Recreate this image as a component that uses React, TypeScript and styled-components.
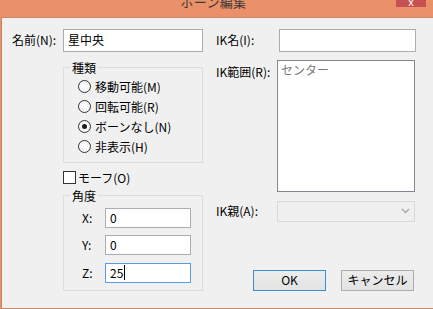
import React from 'react';
import styled, { createGlobalStyle } from 'styled-components';

const GlobalStyle = createGlobalStyle`
  html, body {
    margin: 0;
    padding: 0;
    background: #eb9169;
    overflow: hidden;
  }
  body {
    font-family: "Noto Sans CJK JP", "Noto Sans", sans-serif;
    font-size: 12px;
    color: #000;
  }
`;

const Frame = styled.div`
  width: 433px;
  height: 309px;
  display: flex;
  flex-direction: column;
`;

const TitleBar = styled.div`
  position: relative;
  height: 17px;
  overflow: hidden;
  display: flex;
  justify-content: center;
  align-items: flex-end;
  padding-right: 6px;
`;

const Title = styled.span`
  font-size: 13px;
  line-height: 20px;
  margin-bottom: 5px;
  color: #3a3a3a;
  letter-spacing: 0.3px;
`;

const CloseButton = styled.div`
  position: absolute;
  top: 0;
  right: 7px;
  width: 30px;
  height: 7px;
  background: #c75050;
  overflow: hidden;
  display: flex;
  justify-content: center;
  align-items: flex-end;
  color: #fff;
  font-size: 11px;
  line-height: 11px;
`;

const Client = styled.div`
  margin-left: 1px;
  width: 424px;
  height: 283px;
  background: #f0f0f0;
  border: 1px solid #c98663;
  padding: 11px 0 0 10px;
  box-sizing: content-box;
  display: grid;
  grid-template-columns: 191px 200px;
  column-gap: 13px;
  align-items: start;
`;

const Column = styled.div`
  display: flex;
  flex-direction: column;
`;

const FieldRow = styled.div<{ $label: number; $gap?: number }>`
  display: grid;
  grid-template-columns: ${(p) => p.$label}px auto;
  align-items: center;
  margin-top: ${(p) => p.$gap ?? 0}px;
`;

const Label = styled.span`
  line-height: 16px;
  white-space: nowrap;
`;

const TextInput = styled.div<{ $w: number; $h: number; $focus?: boolean }>`
  width: ${(p) => p.$w}px;
  height: ${(p) => p.$h}px;
  box-sizing: border-box;
  background: #fff;
  border: 1px solid ${(p) => (p.$focus ? '#569de5' : '#abadb3')};
  padding: 0 4px;
  display: flex;
  align-items: center;
  line-height: 16px;
`;

const Caret = styled.span`
  display: inline-block;
  width: 1px;
  height: 15px;
  background: #000;
  margin-left: 1px;
`;

const Group = styled.fieldset<{ $top: number }>`
  margin: ${(p) => p.$top}px 0 0 51px;
  width: 140px;
  box-sizing: border-box;
  border: 1px solid #dcdcdc;
  padding: 0;
`;

const GroupBody = styled.div<{ $pt: number; $pb: number; $pl: number }>`
  padding: ${(p) => p.$pt}px 0 ${(p) => p.$pb}px ${(p) => p.$pl}px;
`;

const Legend = styled.legend`
  margin-left: 6px;
  padding: 0 2px;
  font-size: 12px;
  line-height: 16px;
`;

const RadioRow = styled.div`
  height: 20px;
  display: flex;
  align-items: center;
  gap: 4px;
`;

const RadioDot = styled.span<{ $on?: boolean }>`
  width: 13px;
  height: 13px;
  box-sizing: border-box;
  border-radius: 50%;
  border: 1px solid #333;
  background: radial-gradient(circle, #fff 0%, #f4f4f4 70%, #e6e6e6 100%);
  display: flex;
  justify-content: center;
  align-items: center;
  &::after {
    content: '';
    display: ${(p) => (p.$on ? 'block' : 'none')};
    width: 5px;
    height: 5px;
    border-radius: 50%;
    background: #1c1c1c;
  }
`;

const CheckRow = styled.div`
  margin: 7px 0 0 51px;
  height: 16px;
  display: flex;
  align-items: center;
  gap: 2px;
`;

const CheckBox = styled.span`
  width: 13px;
  height: 13px;
  box-sizing: border-box;
  border: 1px solid #333;
  background: #fff;
`;

const AxisGrid = styled.div`
  display: grid;
  grid-template-columns: 23px 86px;
  row-gap: 7.5px;
  align-items: center;
`;

const ListBox = styled.div`
  width: 138px;
  height: 132px;
  box-sizing: border-box;
  background: #fff;
  border: 1px solid #828790;
  padding: 1px 3px;
  color: #7a7a7a;
  line-height: 16px;
`;

const TopLabel = styled(Label)`
  align-self: start;
  padding-top: 4px;
`;

const Combo = styled.div`
  width: 138px;
  height: 21px;
  box-sizing: border-box;
  background: #efefef;
  border: 1px solid #d9d9d9;
  display: flex;
  justify-content: flex-end;
  align-items: center;
  padding-right: 4px;
`;

const ButtonRow = styled.div`
  margin-top: 48px;
  padding-right: 2px;
  display: flex;
  justify-content: flex-end;
  gap: 15px;
`;

const Button = styled.div<{ $default?: boolean }>`
  width: 73px;
  height: 21px;
  box-sizing: border-box;
  background: linear-gradient(#ececec, #e3e3e3);
  border: 1px solid ${(p) => (p.$default ? '#3c8ed8' : '#adadad')};
  display: flex;
  justify-content: center;
  align-items: center;
  line-height: 16px;
`;

const types = [
  { label: '移動可能(M)', on: false },
  { label: '回転可能(R)', on: false },
  { label: 'ボーンなし(N)', on: true },
  { label: '非表示(H)', on: false },
];

const axes = [
  { name: 'X:', value: '0' },
  { name: 'Y:', value: '0' },
  { name: 'Z:', value: '25', focus: true },
];

export default function App() {
  return (
    <>
      <GlobalStyle />
      <Frame>
        <TitleBar>
          <Title>ボーン編集</Title>
          <CloseButton>x</CloseButton>
        </TitleBar>
        <Client>
          <Column>
            <FieldRow $label={51}>
              <Label>名前(N):</Label>
              <TextInput $w={140} $h={23}>星中央</TextInput>
            </FieldRow>
            <Group $top={8}>
              <Legend>種類</Legend>
              <GroupBody $pt={1} $pb={5} $pl={14}>
                {types.map((t) => (
                  <RadioRow key={t.label}>
                    <RadioDot $on={t.on} />
                    <Label>{t.label}</Label>
                  </RadioRow>
                ))}
              </GroupBody>
            </Group>
            <CheckRow>
              <CheckBox />
              <Label>モーフ(O)</Label>
            </CheckRow>
            <Group $top={2}>
              <Legend>角度</Legend>
              <GroupBody $pt={4} $pb={7} $pl={18}>
                <AxisGrid>
                  {axes.map((a) => (
                    <React.Fragment key={a.name}>
                      <Label>{a.name}</Label>
                      <TextInput $w={86} $h={20} $focus={a.focus}>
                        {a.value}
                        {a.focus && <Caret />}
                      </TextInput>
                    </React.Fragment>
                  ))}
                </AxisGrid>
              </GroupBody>
            </Group>
          </Column>
          <Column>
            <FieldRow $label={63}>
              <Label>IK名(I):</Label>
              <TextInput $w={137} $h={23} />
            </FieldRow>
            <FieldRow $label={61} $gap={8}>
              <TopLabel>IK範囲(R):</TopLabel>
              <ListBox>センター</ListBox>
            </FieldRow>
            <FieldRow $label={61} $gap={9}>
              <Label>IK親(A):</Label>
              <Combo>
                <svg width="9" height="6" viewBox="0 0 9 6">
                  <path d="M1 1 L4.5 4.5 L8 1" fill="none" stroke="#a8a8a8" strokeWidth="1.4" />
                </svg>
              </Combo>
            </FieldRow>
            <ButtonRow>
              <Button $default>OK</Button>
              <Button>キャンセル</Button>
            </ButtonRow>
          </Column>
        </Client>
      </Frame>
    </>
  );
}
